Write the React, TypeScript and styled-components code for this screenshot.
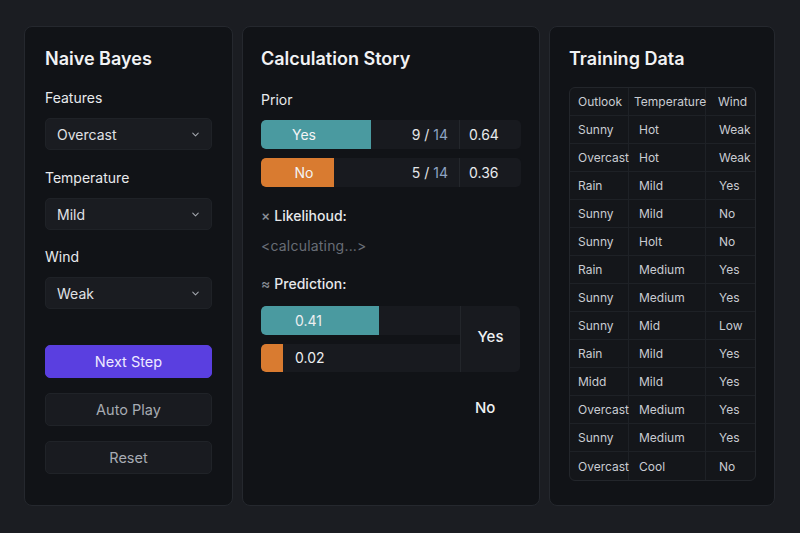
import React from "react";
import styled, { createGlobalStyle } from "styled-components";
import { ChevronDown } from "lucide-react";

const Global = createGlobalStyle`
  html, body { margin: 0; padding: 0; background: #1b1d22; }
  body { font-family: Inter, "Noto Sans", "Liberation Sans", sans-serif; -webkit-font-smoothing: antialiased; }
  * { box-sizing: border-box; }
`;

const Page = styled.div`
  width: 800px;
  height: 533px;
  padding: 26px 25px 27px 24px;
  display: grid;
  grid-template-columns: 209px 298px 226px;
  gap: 9px;
  background: #1b1d22;
`;

const Panel = styled.section<{ $pad?: number }>`
  background: #111317;
  border: 1px solid #25282e;
  border-radius: 8px;
  padding: 21px ${(p) => p.$pad ?? 20}px 0 ${(p) => p.$pad ?? 20}px;
  display: flex;
  flex-direction: column;
`;

const Title = styled.h2`
  margin: 0;
  font-size: 18px;
  line-height: 22px;
  font-weight: 600;
  color: #f1f2f4;
`;

const Label = styled.div<{ $top: number }>`
  margin-top: ${(p) => p.$top}px;
  font-size: 14px;
  line-height: 20px;
  font-weight: 400;
  color: #e8eaed;
`;

const Select = styled.div`
  margin-top: 10px;
  height: 32px;
  border-radius: 5px;
  background: #1a1c21;
  border: 1px solid #1f2227;
  display: flex;
  align-items: center;
  justify-content: space-between;
  padding: 0 10px 0 11px;
  font-size: 14px;
  color: #e0e2e6;
`;

const Button = styled.button<{ $primary?: boolean; $top: number }>`
  margin-top: ${(p) => p.$top}px;
  height: 33px;
  width: 100%;
  border-radius: 5px;
  font-family: inherit;
  font-size: 14.5px;
  font-weight: 400;
  background: ${(p) => (p.$primary ? "#5a3fe0" : "#191b20")};
  border: 1px solid ${(p) => (p.$primary ? "#5a3fe0" : "#202328")};
  color: ${(p) => (p.$primary ? "#eeeaff" : "#a7abb3")};
`;

const BarRow = styled.div<{ $top: number }>`
  margin-top: ${(p) => p.$top}px;
  height: 29px;
  display: grid;
  grid-template-columns: 198px 61px;
  background: #181a1f;
  border-radius: 5px;
  overflow: hidden;
`;

const Track = styled.div`
  position: relative;
  display: flex;
  align-items: center;
  justify-content: space-between;
  padding-right: 11px;
`;

const Fill = styled.div<{ $color: string }>`
  position: absolute;
  left: 0;
  top: 0;
  bottom: 0;
  background: ${(p) => p.$color};
  border-radius: 4px 0 0 4px;
`;

const BarLabel = styled.span`
  position: relative;
  width: 86px;
  text-align: center;
  font-size: 14px;
  color: #f3f4f5;
`;

const Count = styled.span`
  position: relative;
  font-size: 14px;
  color: #e3e5e8;
  & b {
    font-weight: 400;
    color: #8ea4c4;
  }
`;

const Value = styled.div`
  border-left: 1px solid #24272c;
  display: flex;
  align-items: center;
  padding-left: 9px;
  font-size: 14px;
  color: #e8eaed;
`;

const Heading = styled.div<{ $top: number }>`
  margin-top: ${(p) => p.$top}px;
  font-size: 14px;
  line-height: 20px;
  font-weight: 500;
  color: #e6e8eb;
  & span {
    color: #8a8f98;
    margin-right: 4px;
  }
`;

const Muted = styled.div`
  margin-top: 10px;
  font-size: 14px;
  line-height: 20px;
  color: #686d76;
  letter-spacing: 0.2px;
`;

const PredBlock = styled.div`
  margin-top: 12px;
  display: grid;
  grid-template-columns: 199px 60px;
`;

const PredRows = styled.div`
  display: flex;
  flex-direction: column;
  gap: 9px;
`;

const PredRow = styled.div`
  position: relative;
  height: 28.5px;
  background: #181a1f;
  border-radius: 5px 0 0 5px;
  display: flex;
  align-items: center;
  padding-left: 34px;
  font-size: 14px;
  color: #eceef0;
  overflow: hidden;
  & span { position: relative; }
`;

const PredResult = styled.div`
  background: #181a1f;
  border-left: 1px solid #23262b;
  border-radius: 0 5px 5px 0;
  display: flex;
  align-items: center;
  justify-content: center;
  padding-bottom: 6px;
  font-size: 15px;
  font-weight: 500;
  color: #eef0f2;
`;

const Below = styled.div`
  margin-top: 26px;
  display: grid;
  grid-template-columns: 199px 60px;
  font-size: 15px;
  font-weight: 500;
  color: #eef0f2;
  line-height: 20px;
  & span { grid-column: 2; padding-left: 15px; }
`;

const Table = styled.table`
  margin-top: 17px;
  border-collapse: separate;
  border-spacing: 0;
  border: 1px solid #23262b;
  border-radius: 6px;
  background: #14161a;
  font-size: 12px;
  color: #c9ccd2;
  width: 187px;
  table-layout: fixed;
  overflow: hidden;
`;

const Cell = styled.td<{ $pl: number; $w?: number }>`
  height: 28px;
  padding: 0 0 0 ${(p) => p.$pl}px;
  border-bottom: 1px solid #1e2126;
  border-right: 1px solid #1e2126;
  white-space: nowrap;
  ${(p) => (p.$w ? `width: ${p.$w}px;` : "")}
  &:last-child { border-right: none; }
  tr:last-child > & { border-bottom: none; }
`;

const rows: [string, string, string][] = [
  ["Sunny", "Hot", "Weak"],
  ["Overcast", "Hot", "Weak"],
  ["Rain", "Mild", "Yes"],
  ["Sunny", "Mild", "No"],
  ["Sunny", "Holt", "No"],
  ["Rain", "Medium", "Yes"],
  ["Sunny", "Medium", "Yes"],
  ["Sunny", "Mid", "Low"],
  ["Rain", "Mild", "Yes"],
  ["Midd", "Mild", "Yes"],
  ["Overcast", "Medium", "Yes"],
  ["Sunny", "Medium", "Yes"],
  ["Overcast", "Cool", "No"],
];

const Chevron = () => <ChevronDown size={11} color="#a3a7ae" strokeWidth={2.2} />;

export default function App() {
  return (
    <>
      <Global />
      <Page>
        <Panel $pad={20}>
          <Title>Naive Bayes</Title>
          <Label $top={18}>Features</Label>
          <Select>
            Overcast <Chevron />
          </Select>
          <Label $top={18}>Temperature</Label>
          <Select>
            Mild <Chevron />
          </Select>
          <Label $top={17}>Wind</Label>
          <Select>
            Weak <Chevron />
          </Select>
          <Button $primary $top={36}>Next Step</Button>
          <Button $top={15}>Auto Play</Button>
          <Button $top={15}>Reset</Button>
        </Panel>

        <Panel $pad={18}>
          <Title>Calculation Story</Title>
          <Label $top={20}>Prior</Label>
          <BarRow $top={10}>
            <Track>
              <Fill $color="#4a9aa0" style={{ width: 110 }} />
              <BarLabel>Yes</BarLabel>
              <Count>
                9 / <b>14</b>
              </Count>
            </Track>
            <Value>0.64</Value>
          </BarRow>
          <BarRow $top={9}>
            <Track>
              <Fill $color="#d97b30" style={{ width: 73 }} />
              <BarLabel>No</BarLabel>
              <Count>
                5 / <b>14</b>
              </Count>
            </Track>
            <Value>0.36</Value>
          </BarRow>
          <Heading $top={19}>
            <span>×</span>Likelihoud:
          </Heading>
          <Muted>&lt;calculating...&gt;</Muted>
          <Heading $top={18}>
            <span>≈</span>Prediction:
          </Heading>
          <PredBlock>
            <PredRows>
              <PredRow>
                <Fill $color="#4a9aa0" style={{ width: 118 }} />
                <span>0.41</span>
              </PredRow>
              <PredRow>
                <Fill $color="#d97b30" style={{ width: 22 }} />
                <span>0.02</span>
              </PredRow>
            </PredRows>
            <PredResult>Yes</PredResult>
          </PredBlock>
          <Below>
            <span>No</span>
          </Below>
        </Panel>

        <Panel $pad={19}>
          <Title>Training Data</Title>
          <Table>
            <tbody>
              <tr>
                <Cell $pl={8} $w={59}>Outlook</Cell>
                <Cell $pl={5} $w={77}>Temperature</Cell>
                <Cell $pl={12}>Wind</Cell>
              </tr>
              {rows.map((r, i) => (
                <tr key={i}>
                  <Cell $pl={8}>{r[0]}</Cell>
                  <Cell $pl={10}>{r[1]}</Cell>
                  <Cell $pl={13}>{r[2]}</Cell>
                </tr>
              ))}
            </tbody>
          </Table>
        </Panel>
      </Page>
    </>
  );
}
